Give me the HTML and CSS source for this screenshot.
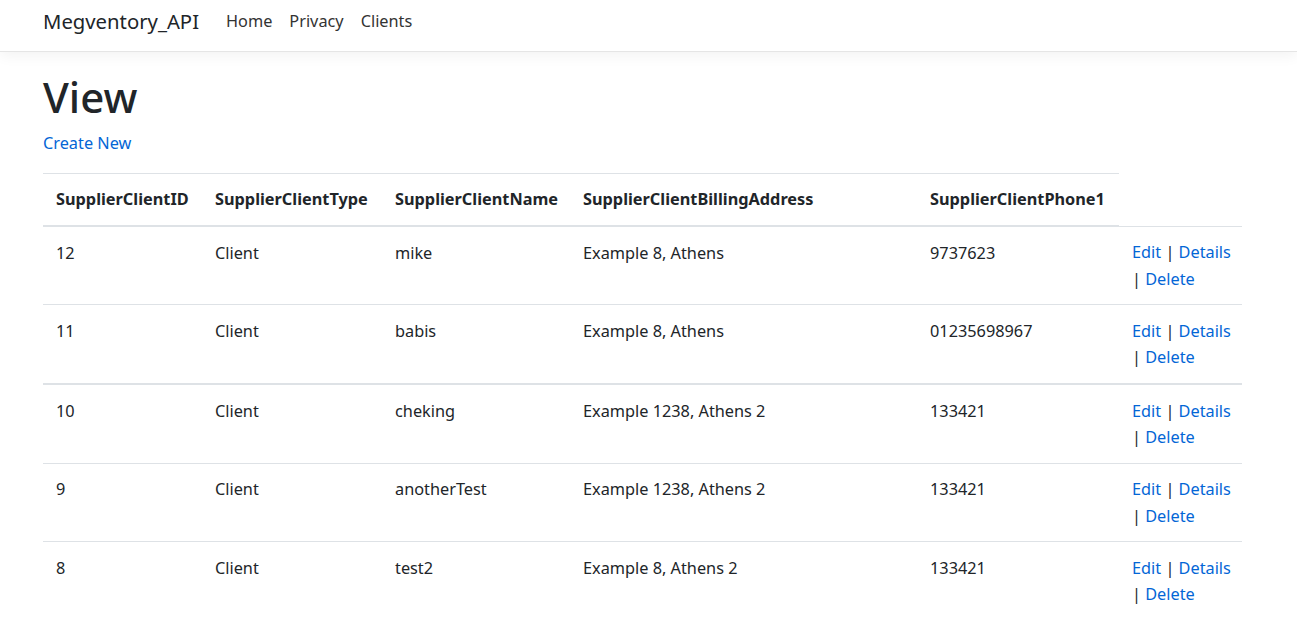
FILE: index.html
```html
<!DOCTYPE html>
<html lang="en">
<head>
<meta charset="utf-8">
<title>View - Megventory_API</title>
<link rel="stylesheet" href="styles.css">
</head>
<body>
<header class="navbar">
  <div class="nav-inner">
    <a class="brand" href="#">Megventory_API</a>
    <ul class="nav-links">
      <li><a href="#">Home</a></li>
      <li><a href="#">Privacy</a></li>
      <li><a href="#">Clients</a></li>
    </ul>
  </div>
</header>
<main class="content">
  <h1 class="title">View</h1>
  <p class="create"><a href="#">Create New</a></p>
  <table class="data-table">
    <colgroup>
      <col class="c1"><col class="c2"><col class="c3"><col class="c4"><col class="c5"><col class="c6">
    </colgroup>
    <thead>
      <tr>
        <th>SupplierClientID</th>
        <th>SupplierClientType</th>
        <th>SupplierClientName</th>
        <th>SupplierClientBillingAddress</th>
        <th>SupplierClientPhone1</th>
      </tr>
    </thead>
    <tbody>
      <tr>
        <td>12</td><td>Client</td><td>mike</td><td>Example 8, Athens</td><td>9737623</td>
        <td class="actions"><span class="line"><a href="#">Edit</a> | <a href="#">Details</a></span><span class="line">| <a href="#">Delete</a></span></td>
      </tr>
      <tr>
        <td>11</td><td>Client</td><td>babis</td><td>Example 8, Athens</td><td>01235698967</td>
        <td class="actions"><span class="line"><a href="#">Edit</a> | <a href="#">Details</a></span><span class="line">| <a href="#">Delete</a></span></td>
      </tr>
      <tr class="thick">
        <td>10</td><td>Client</td><td>cheking</td><td>Example 1238, Athens 2</td><td>133421</td>
        <td class="actions"><span class="line"><a href="#">Edit</a> | <a href="#">Details</a></span><span class="line">| <a href="#">Delete</a></span></td>
      </tr>
      <tr>
        <td>9</td><td>Client</td><td>anotherTest</td><td>Example 1238, Athens 2</td><td>133421</td>
        <td class="actions"><span class="line"><a href="#">Edit</a> | <a href="#">Details</a></span><span class="line">| <a href="#">Delete</a></span></td>
      </tr>
      <tr>
        <td>8</td><td>Client</td><td>test2</td><td>Example 8, Athens 2</td><td>133421</td>
        <td class="actions"><span class="line"><a href="#">Edit</a> | <a href="#">Details</a></span><span class="line">| <a href="#">Delete</a></span></td>
      </tr>
    </tbody>
  </table>
</main>
</body>
</html>
```

FILE: styles.css
```css
* { box-sizing: border-box; }
html, body { margin: 0; padding: 0; }
body {
  font-family: "Noto Sans", "Open Sans", sans-serif;
  font-size: 16.3px;
  line-height: 26.4px;
  color: #212529;
  background: #fff;
}
a { color: #0366d6; text-decoration: none; }

.navbar {
  height: 52px;
  border-bottom: 1px solid #e5e5e5;
  box-shadow: 0 4px 13px rgba(0,0,0,0.05);
  background: #fff;
}
.nav-inner {
  display: flex;
  align-items: center;
  height: 51px;
  padding-left: 43px;
  padding-bottom: 9px;
}
.brand {
  font-size: 20.3px;
  color: #212529;
  margin-right: 27px;
}
.nav-links {
  display: flex;
  list-style: none;
  margin: 0;
  padding: 0;
  gap: 17px;
}
.nav-links a { color: #333; }

.content { padding-left: 43px; }
.title {
  font-size: 42px;
  font-weight: 500;
  line-height: 1.2;
  margin: 20px 0 8px;
}
.create { margin: 0 0 16px; }

.data-table {
  width: 1199px;
  border-collapse: collapse;
  table-layout: fixed;
}
.c1 { width: 159px; }
.c2 { width: 180px; }
.c3 { width: 188px; }
.c4 { width: 347px; }
.c5 { width: 202px; }
.c6 { width: 123px; }
.data-table th, .data-table td {
  padding: 12.5px 12.6px 12.4px 13px;
  text-align: left;
  vertical-align: top;
  border-top: 1px solid #dee2e6;
}
.data-table th {
  vertical-align: bottom;
  border-bottom: 2px solid #dee2e6;
  font-weight: 700;
  white-space: nowrap;
}
.data-table tr.thick td { border-top: 2px solid #dee2e6; }
.actions .line { display: block; white-space: nowrap; }
```
